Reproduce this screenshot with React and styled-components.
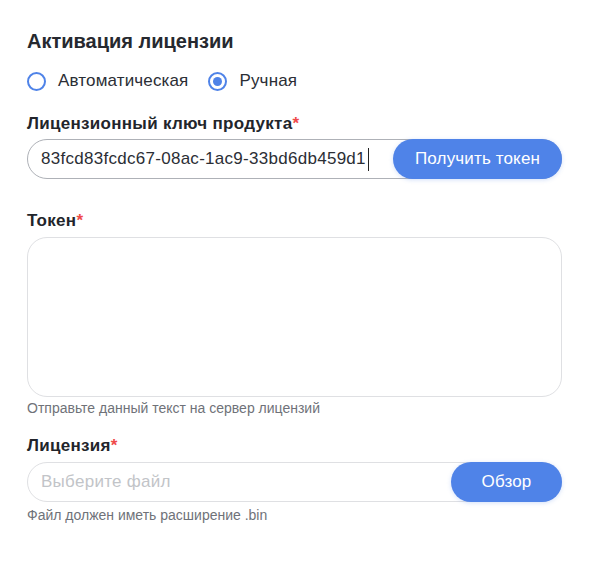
import React, { useState } from "react";
import styled, { createGlobalStyle } from "styled-components";

const GlobalStyle = createGlobalStyle`
  body {
    margin: 0;
    background: #fff;
    font-family: "Liberation Sans", Arial, sans-serif;
    color: #22252b;
  }
`;

const Form = styled.div`
  width: 535px;
  padding: 29px 0 0 27px;
  display: flex;
  flex-direction: column;
`;

const Title = styled.h2`
  margin: 0;
  font-size: 20px;
  font-weight: 700;
  line-height: 24px;
  color: #26292f;
`;

const RadioGroup = styled.div`
  display: flex;
  align-items: center;
  gap: 20px;
  margin-top: 18px;
`;

const RadioLabel = styled.label`
  display: flex;
  align-items: center;
  gap: 12px;
  font-size: 17px;
  line-height: 20px;
  letter-spacing: 0.15px;
  color: #2b2e35;
  cursor: pointer;
`;

const RadioCircle = styled.span`
  box-sizing: border-box;
  width: 19px;
  height: 19px;
  border-radius: 50%;
  border: 2px solid #4f83e8;
  display: flex;
  align-items: center;
  justify-content: center;
  &::after {
    content: "";
    width: 9px;
    height: 9px;
    border-radius: 50%;
    background: #4f83e8;
    display: ${(p) => (p.checked ? "block" : "none")};
  }
`;

const Label = styled.div`
  font-size: 17px;
  font-weight: 700;
  line-height: 20px;
  letter-spacing: 0.3px;
  margin-top: ${(p) => p.top}px;
  color: #22252b;
  span {
    color: #ef4a4a;
  }
`;

const FieldRow = styled.div`
  position: relative;
  margin-top: ${(p) => p.top}px;
  height: 40px;
`;

const TextInput = styled.div`
  box-sizing: border-box;
  height: 40px;
  width: 100%;
  border: 1px solid ${(p) => (p.active ? "#aeb1b7" : "#dfe0e3")};
  border-radius: 20px;
  padding: 0 13px;
  display: flex;
  align-items: center;
  font-size: 17px;
  letter-spacing: 0.28px;
  color: ${(p) => (p.placeholder ? "#c2c4c8" : "#2b2e35")};
`;

const Caret = styled.span`
  display: inline-block;
  width: 1px;
  height: 23px;
  background: #222;
  margin-left: 2px;
`;

const ActionButton = styled.button`
  position: absolute;
  right: 0;
  top: 0;
  height: 40px;
  width: ${(p) => p.w}px;
  border: none;
  border-radius: 20px;
  background: #4f83e8;
  color: #fff;
  font-family: inherit;
  font-size: 17px;
  letter-spacing: 0.15px;
  box-shadow: 0 1px 4px rgba(79, 131, 232, 0.25);
  cursor: pointer;
`;

const TextArea = styled.div`
  box-sizing: border-box;
  margin-top: 6px;
  height: 160px;
  border: 1px solid #dfe0e3;
  border-radius: 20px;
`;

const Hint = styled.div`
  font-size: 14px;
  line-height: 16px;
  color: #6f7279;
  margin-top: ${(p) => p.top}px;
`;

export default function App() {
  const [mode, setMode] = useState("manual");

  return (
    <>
      <GlobalStyle />
      <Form>
        <Title>Активация лицензии</Title>
        <RadioGroup>
          <RadioLabel onClick={() => setMode("auto")}>
            <RadioCircle checked={mode === "auto"} />
            Автоматическая
          </RadioLabel>
          <RadioLabel onClick={() => setMode("manual")}>
            <RadioCircle checked={mode === "manual"} />
            Ручная
          </RadioLabel>
        </RadioGroup>

        <Label top={23}>
          Лицензионный ключ продукта<span>*</span>
        </Label>
        <FieldRow top={5}>
          <TextInput active>
            83fcd83fcdc67-08ac-1ac9-33bd6db459d1
            <Caret />
          </TextInput>
          <ActionButton w={169}>Получить токен</ActionButton>
        </FieldRow>

        <Label top={32}>
          Токен<span>*</span>
        </Label>
        <TextArea />
        <Hint top={3}>Отправьте данный текст на сервер лицензий</Hint>

        <Label top={20}>
          Лицензия<span>*</span>
        </Label>
        <FieldRow top={6}>
          <TextInput placeholder="1">Выберите файл</TextInput>
          <ActionButton w={111}>Обзор</ActionButton>
        </FieldRow>
        <Hint top={5}>Файл должен иметь расширение .bin</Hint>
      </Form>
    </>
  );
}
